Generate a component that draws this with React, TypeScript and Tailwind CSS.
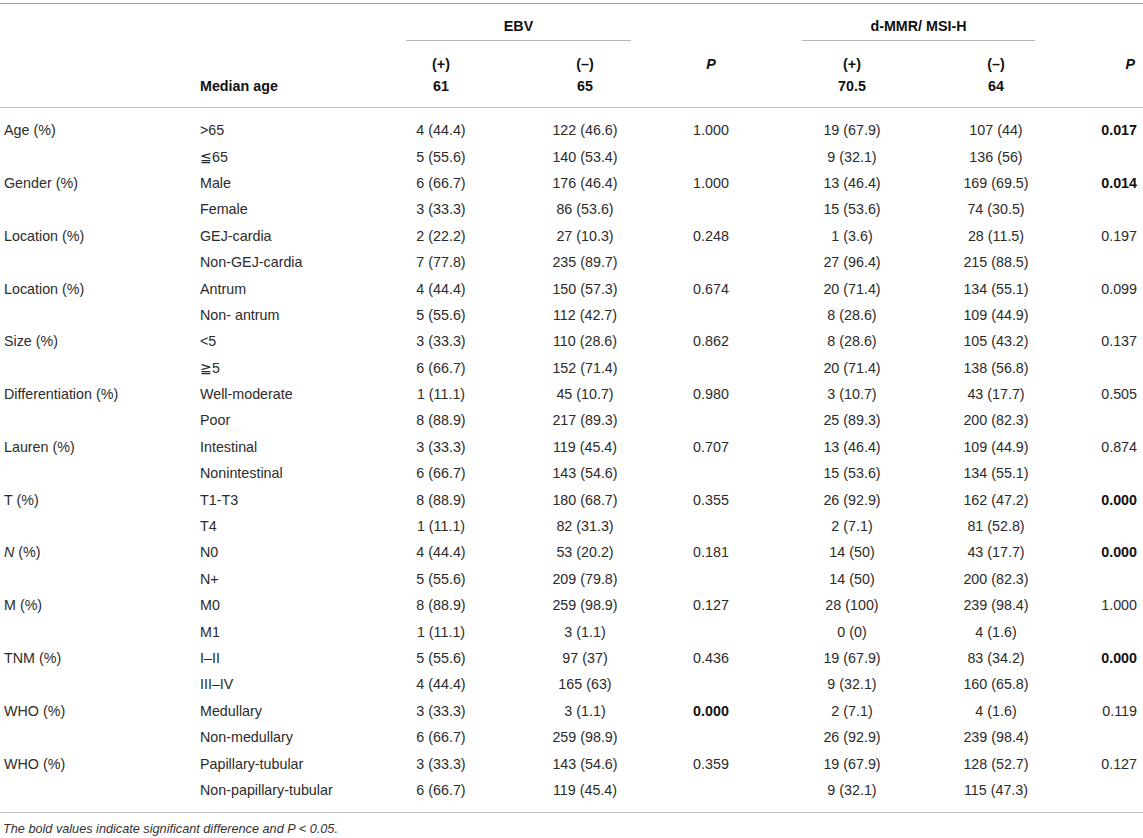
import type { ReactNode } from 'react'

type Row = {
  group?: ReactNode
  level: string
  ebvPos: string
  ebvNeg: string
  ebvP?: string
  ebvBold?: boolean
  mmrPos: string
  mmrNeg: string
  mmrP?: string
  mmrBold?: boolean
}

const rows: Row[] = [
  { group: 'Age (%)', level: '>65', ebvPos: '4 (44.4)', ebvNeg: '122 (46.6)', ebvP: '1.000', mmrPos: '19 (67.9)', mmrNeg: '107 (44)', mmrP: '0.017', mmrBold: true },
  { level: '≦65', ebvPos: '5 (55.6)', ebvNeg: '140 (53.4)', mmrPos: '9 (32.1)', mmrNeg: '136 (56)' },
  { group: 'Gender (%)', level: 'Male', ebvPos: '6 (66.7)', ebvNeg: '176 (46.4)', ebvP: '1.000', mmrPos: '13 (46.4)', mmrNeg: '169 (69.5)', mmrP: '0.014', mmrBold: true },
  { level: 'Female', ebvPos: '3 (33.3)', ebvNeg: '86 (53.6)', mmrPos: '15 (53.6)', mmrNeg: '74 (30.5)' },
  { group: 'Location (%)', level: 'GEJ-cardia', ebvPos: '2 (22.2)', ebvNeg: '27 (10.3)', ebvP: '0.248', mmrPos: '1 (3.6)', mmrNeg: '28 (11.5)', mmrP: '0.197' },
  { level: 'Non-GEJ-cardia', ebvPos: '7 (77.8)', ebvNeg: '235 (89.7)', mmrPos: '27 (96.4)', mmrNeg: '215 (88.5)' },
  { group: 'Location (%)', level: 'Antrum', ebvPos: '4 (44.4)', ebvNeg: '150 (57.3)', ebvP: '0.674', mmrPos: '20 (71.4)', mmrNeg: '134 (55.1)', mmrP: '0.099' },
  { level: 'Non- antrum', ebvPos: '5 (55.6)', ebvNeg: '112 (42.7)', mmrPos: '8 (28.6)', mmrNeg: '109 (44.9)' },
  { group: 'Size (%)', level: '<5', ebvPos: '3 (33.3)', ebvNeg: '110 (28.6)', ebvP: '0.862', mmrPos: '8 (28.6)', mmrNeg: '105 (43.2)', mmrP: '0.137' },
  { level: '≧5', ebvPos: '6 (66.7)', ebvNeg: '152 (71.4)', mmrPos: '20 (71.4)', mmrNeg: '138 (56.8)' },
  { group: 'Differentiation (%)', level: 'Well-moderate', ebvPos: '1 (11.1)', ebvNeg: '45 (10.7)', ebvP: '0.980', mmrPos: '3 (10.7)', mmrNeg: '43 (17.7)', mmrP: '0.505' },
  { level: 'Poor', ebvPos: '8 (88.9)', ebvNeg: '217 (89.3)', mmrPos: '25 (89.3)', mmrNeg: '200 (82.3)' },
  { group: 'Lauren (%)', level: 'Intestinal', ebvPos: '3 (33.3)', ebvNeg: '119 (45.4)', ebvP: '0.707', mmrPos: '13 (46.4)', mmrNeg: '109 (44.9)', mmrP: '0.874' },
  { level: 'Nonintestinal', ebvPos: '6 (66.7)', ebvNeg: '143 (54.6)', mmrPos: '15 (53.6)', mmrNeg: '134 (55.1)' },
  { group: 'T (%)', level: 'T1-T3', ebvPos: '8 (88.9)', ebvNeg: '180 (68.7)', ebvP: '0.355', mmrPos: '26 (92.9)', mmrNeg: '162 (47.2)', mmrP: '0.000', mmrBold: true },
  { level: 'T4', ebvPos: '1 (11.1)', ebvNeg: '82 (31.3)', mmrPos: '2 (7.1)', mmrNeg: '81 (52.8)' },
  { group: <><i>N</i> (%)</>, level: 'N0', ebvPos: '4 (44.4)', ebvNeg: '53 (20.2)', ebvP: '0.181', mmrPos: '14 (50)', mmrNeg: '43 (17.7)', mmrP: '0.000', mmrBold: true },
  { level: 'N+', ebvPos: '5 (55.6)', ebvNeg: '209 (79.8)', mmrPos: '14 (50)', mmrNeg: '200 (82.3)' },
  { group: 'M (%)', level: 'M0', ebvPos: '8 (88.9)', ebvNeg: '259 (98.9)', ebvP: '0.127', mmrPos: '28 (100)', mmrNeg: '239 (98.4)', mmrP: '1.000' },
  { level: 'M1', ebvPos: '1 (11.1)', ebvNeg: '3 (1.1)', mmrPos: '0 (0)', mmrNeg: '4 (1.6)' },
  { group: 'TNM (%)', level: 'I–II', ebvPos: '5 (55.6)', ebvNeg: '97 (37)', ebvP: '0.436', mmrPos: '19 (67.9)', mmrNeg: '83 (34.2)', mmrP: '0.000', mmrBold: true },
  { level: 'III–IV', ebvPos: '4 (44.4)', ebvNeg: '165 (63)', mmrPos: '9 (32.1)', mmrNeg: '160 (65.8)' },
  { group: 'WHO (%)', level: 'Medullary', ebvPos: '3 (33.3)', ebvNeg: '3 (1.1)', ebvP: '0.000', ebvBold: true, mmrPos: '2 (7.1)', mmrNeg: '4 (1.6)', mmrP: '0.119' },
  { level: 'Non-medullary', ebvPos: '6 (66.7)', ebvNeg: '259 (98.9)', mmrPos: '26 (92.9)', mmrNeg: '239 (98.4)' },
  { group: 'WHO (%)', level: 'Papillary-tubular', ebvPos: '3 (33.3)', ebvNeg: '143 (54.6)', ebvP: '0.359', mmrPos: '19 (67.9)', mmrNeg: '128 (52.7)', mmrP: '0.127' },
  { level: 'Non-papillary-tubular', ebvPos: '6 (66.7)', ebvNeg: '119 (45.4)', mmrPos: '9 (32.1)', mmrNeg: '115 (47.3)' },
]

// shared column template so header and body line up
const cols = 'grid grid-cols-[192px_180px_138px_150px_102px_180px_108px_93px]'

export default function App() {
  return (
    <div className="w-[1143px] h-[838px] bg-white pt-[3px] font-['Liberation_Sans',Arial,sans-serif] text-[14.3px] leading-[16px] text-[#2b2b2b]">
      <div className="border-t border-[#a3a3a3]">
        {/* Group headers with underline */}
        <div className={`${cols} pt-[14px]`}>
          <div className="col-start-3 col-span-2 ml-[34px] mr-[29px] border-b border-[#b5b5b5] pb-[6px] text-center font-bold text-[#111]">
            EBV
          </div>
          <div className="col-start-6 col-span-2 ml-[40px] mr-[15px] border-b border-[#b5b5b5] pb-[6px] text-center font-bold text-[#111]">
            d-MMR/ MSI-H
          </div>
        </div>

        {/* Sub headers */}
        <div className={`${cols} auto-rows-[22px] items-center pt-[12px] pb-[10px] font-bold text-[#111]`}>
          <div />
          <div />
          <div className="text-center">(+)</div>
          <div className="text-center">(–)</div>
          <div className="text-center italic">P</div>
          <div className="text-center">(+)</div>
          <div className="text-center">(–)</div>
          <div className="text-right pr-[8px] italic">P</div>

          <div />
          <div className="pl-[8px]">Median age</div>
          <div className="text-center">61</div>
          <div className="text-center">65</div>
          <div />
          <div className="text-center">70.5</div>
          <div className="text-center">64</div>
          <div />
        </div>
      </div>

      {/* Body */}
      <div className={`${cols} auto-rows-[26.4px] items-center border-t border-b border-[#c4c4c4] pt-[9px] pb-[9px]`}>
        {rows.map((r, i) => (
          <div key={i} className="contents">
            <div className="pl-[4px]">{r.group}</div>
            <div className="pl-[8px]">{r.level}</div>
            <div className="text-center">{r.ebvPos}</div>
            <div className="text-center">{r.ebvNeg}</div>
            <div className={`text-center ${r.ebvBold ? 'font-bold text-[#111]' : ''}`}>{r.ebvP}</div>
            <div className="text-center">{r.mmrPos}</div>
            <div className="text-center">{r.mmrNeg}</div>
            <div className={`text-right pr-[6px] ${r.mmrBold ? 'font-bold text-[#111]' : ''}`}>{r.mmrP}</div>
          </div>
        ))}
      </div>

      <p className="mt-[8px] pl-[3px] text-[12.7px] italic text-[#333]">
        The bold values indicate significant difference and <span>P</span> &lt; 0.05.
      </p>
    </div>
  )
}
